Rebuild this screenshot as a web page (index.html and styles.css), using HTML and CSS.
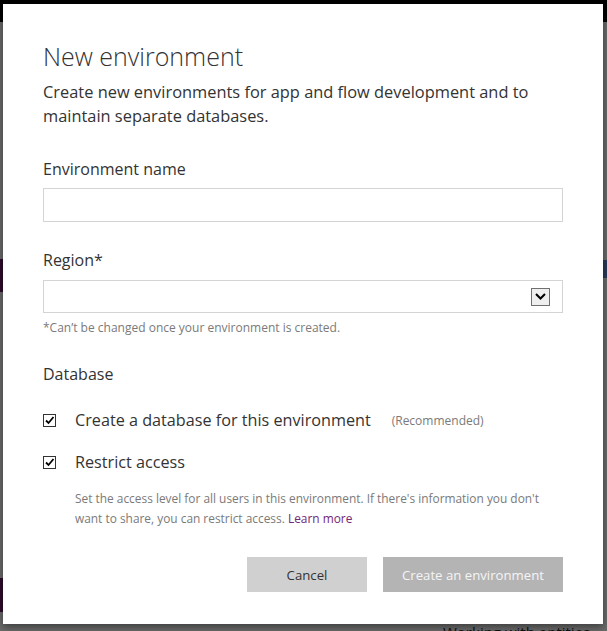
FILE: index.html
```html
<!DOCTYPE html>
<html lang="en">
<head>
<meta charset="utf-8">
<title>New environment</title>
<link rel="stylesheet" href="styles.css">
</head>
<body>
<div class="backdrop">
  <div class="topbar"></div>
  <div class="nav-item nav-a"></div>
  <div class="nav-item nav-b"></div>
  <div class="side-tab"></div>
  <div class="bg-text">Working with entities</div>
</div>
<div class="modal" role="dialog" aria-labelledby="dlg-title">
  <h1 id="dlg-title" class="title">New environment</h1>
  <p class="intro">Create new environments for app and flow development and to maintain separate databases.</p>

  <div class="field">
    <label class="field-label" for="env-name">Environment name</label>
    <input id="env-name" class="text-input" type="text">
  </div>

  <div class="field field-region">
    <label class="field-label">Region*</label>
    <div class="select">
      <span class="select-btn">
        <svg width="11" height="7" viewBox="0 0 11 7"><path d="M1 1 L5.5 5.5 L10 1" fill="none" stroke="#000" stroke-width="2"/></svg>
      </span>
    </div>
    <p class="hint">*Can’t be changed once your environment is created.</p>
  </div>

  <h2 class="section">Database</h2>

  <div class="check-row">
    <span class="checkbox"><svg width="11" height="11" viewBox="0 0 11 11"><path d="M2 5.5 L4.5 8 L9.5 2" fill="none" stroke="#000" stroke-width="1.8"/></svg></span>
    <span class="check-label">Create a database for this environment</span>
    <span class="check-note">(Recommended)</span>
  </div>

  <div class="check-row check-row-2">
    <span class="checkbox"><svg width="11" height="11" viewBox="0 0 11 11"><path d="M2 5.5 L4.5 8 L9.5 2" fill="none" stroke="#000" stroke-width="1.8"/></svg></span>
    <span class="check-label">Restrict access</span>
  </div>
  <p class="desc">Set the access level for all users in this environment. If there's information you don't want to share, you can restrict access. <a class="link" href="#">Learn more</a></p>

  <div class="actions">
    <button class="btn btn-cancel" type="button">Cancel</button>
    <button class="btn btn-create" type="button">Create an environment</button>
  </div>
</div>
</body>
</html>
```

FILE: styles.css
```css
* { box-sizing: border-box; }

html, body {
  margin: 0;
  padding: 0;
  width: 607px;
  height: 631px;
  overflow: hidden;
}

body {
  background: #6b6b6b;
  font-family: "Segoe UI", "Open Sans", "Noto Sans", sans-serif;
  color: #333;
  position: relative;
}

.backdrop {
  position: absolute;
  inset: 0;
}

.topbar {
  height: 22px;
  background: #000;
}

.nav-item {
  position: absolute;
  left: 0;
  width: 4px;
  background: #2e0c2c;
}
.nav-a { top: 259px; height: 33px; }
.nav-b { top: 578px; height: 34px; }

.side-tab {
  position: absolute;
  right: 0;
  top: 260px;
  width: 4px;
  height: 18px;
  background: #2b3a5a;
}

.bg-text {
  position: absolute;
  left: 443px;
  top: 622px;
  font-size: 15px;
  color: #111;
  white-space: nowrap;
}

.modal {
  position: absolute;
  left: 3px;
  top: 4px;
  width: 600px;
  height: 620px;
  background: #fff;
  box-shadow: 0 3px 8px rgba(0, 0, 0, 0.45);
  padding: 35px 40px 0 40px;
}

.title {
  margin: 0;
  font-size: 25px;
  font-weight: 300;
  line-height: 34px;
  color: #333;
}

.intro {
  margin: 7px 0 0;
  font-size: 16.4px;
  line-height: 24px;
  color: #333;
}

.field {
  margin-top: 29px;
}

.field-label {
  display: block;
  font-size: 16px;
  line-height: 24px;
  color: #333;
}

.text-input {
  display: block;
  margin-top: 7px;
  width: 520px;
  height: 34px;
  border: 1px solid #d4d4d4;
  background: #fff;
  font: inherit;
  padding: 0 8px;
}

.field-region {
  margin-top: 26px;
}

.select {
  margin-top: 8px;
  width: 520px;
  height: 33px;
  border: 1px solid #d4d4d4;
  display: flex;
  align-items: center;
  justify-content: flex-end;
  padding-right: 12px;
}

.select-btn {
  width: 19px;
  height: 18px;
  border: 1px solid #707070;
  background: #efefef;
  display: flex;
  align-items: center;
  justify-content: center;
}

.hint {
  margin: 7px 0 0;
  font-size: 12px;
  line-height: 16px;
  color: #7a7a7a;
}

.section {
  margin: 26px 0 0;
  font-size: 16px;
  font-weight: 400;
  line-height: 24px;
  color: #333;
}

.check-row {
  display: flex;
  align-items: center;
  margin-top: 21px;
  height: 26px;
}

.check-row-2 {
  margin-top: 16px;
}

.checkbox {
  width: 13px;
  height: 13px;
  border: 1px solid #333;
  display: flex;
  align-items: center;
  justify-content: center;
  flex: none;
}

.check-label {
  margin-left: 19px;
  font-size: 16.2px;
  color: #333;
}

.check-note {
  margin-left: 21px;
  font-size: 12px;
  color: #7a7a7a;
}

.desc {
  margin: 13px 0 0 32px;
  font-size: 11.9px;
  line-height: 20px;
  color: #7a7a7a;
  max-width: 490px;
}

.link {
  color: #742774;
  text-decoration: none;
}

.actions {
  display: flex;
  justify-content: flex-end;
  gap: 16px;
  margin-top: 29px;
}

.btn {
  height: 35px;
  border: none;
  font: inherit;
  font-size: 13.2px;
  padding: 0;
}

.btn-cancel {
  width: 120px;
  background: #d0d0d0;
  color: #333;
}

.btn-create {
  width: 180px;
  background: #b4b4b4;
  color: #f4f4f4;
}
```
